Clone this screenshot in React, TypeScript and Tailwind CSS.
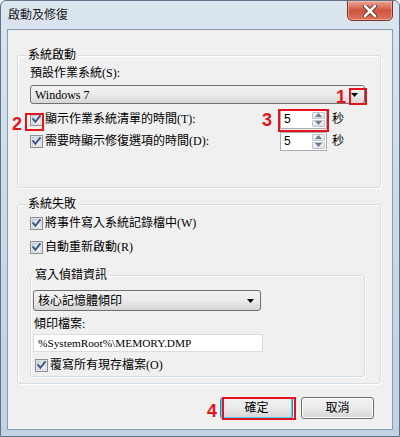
import React from "react";

const FONT = "font-['Liberation_Serif','Noto_Sans_CJK_TC',serif]";

function Check() {
  return (
    <svg width="13" height="13" viewBox="0 0 13 13" className="shrink-0">
      <defs>
        <linearGradient id="cbg" x1="0" y1="0" x2="1" y2="1">
          <stop offset="0" stopColor="#cbd5e1" />
          <stop offset="1" stopColor="#f6f8fa" />
        </linearGradient>
      </defs>
      <rect x="0.5" y="0.5" width="12" height="12" fill="#f4f4f4" stroke="#8e8f8f" />
      <rect x="2" y="2" width="9" height="9" fill="url(#cbg)" stroke="#b4bcc6" strokeWidth="0.6" />
      <path d="M3.2 6.2 L5.4 8.8 L9.9 3.2" stroke="#3f5488" strokeWidth="1.9" fill="none" strokeLinecap="square" />
    </svg>
  );
}

function Tri({ up = false, color = "#000" }: { up?: boolean; color?: string }) {
  return (
    <svg width="7" height="4" viewBox="0 0 7 4">
      {up ? <path d="M0 4 L3.5 0 L7 4 Z" fill={color} /> : <path d="M0 0 L7 0 L3.5 4 Z" fill={color} />}
    </svg>
  );
}

function Spin({ value }: { value: string }) {
  return (
    <div className="flex h-[19px] w-[47px] border border-[#abadb3] bg-white">
      <div className="flex-1 pl-[3px] text-[12px] leading-[17px] font-['Liberation_Sans',sans-serif]">{value}</div>
      <div className="flex w-[15px] flex-col gap-[1px] p-[1px]">
        <div className="flex flex-1 items-center justify-center rounded-[1px] border border-[#c2c6cc] bg-gradient-to-b from-[#f3f4f6] to-[#dfe3e8]">
          <Tri up color="#6b7a8f" />
        </div>
        <div className="flex flex-1 items-center justify-center rounded-[1px] border border-[#c2c6cc] bg-gradient-to-b from-[#f3f4f6] to-[#dfe3e8]">
          <Tri color="#6b7a8f" />
        </div>
      </div>
    </div>
  );
}

function Combo({ text, w, h, latin = false }: { text: string; w: string; h: string; latin?: boolean }) {
  return (
    <div
      className={`flex ${w} ${h} items-center rounded-[3px] border border-[#707070] bg-gradient-to-b from-[#f2f2f2] via-[#ebebeb] to-[#d6d6d6] pl-[4px] pr-[6px]`}
    >
      <span className={`flex-1 ${latin ? "text-[12px]" : "text-[12px]"}`}>{text}</span>
      <Tri />
    </div>
  );
}

function Group({ title, className, children }: { title: string; className: string; children: React.ReactNode }) {
  return (
    <div className={`flex flex-col rounded-[3px] border border-[#d5dfe5] shadow-[inset_1px_1px_0_#ffffff,1px_1px_0_#ffffff] ${className}`}>
      <div className="-mt-[8px] ml-[8px] w-fit bg-[#f0f0f0] px-[2px] leading-[14px]">{title}</div>
      {children}
    </div>
  );
}

function Btn({ label, def = false }: { label: string; def?: boolean }) {
  return (
    <div
      className={`flex h-[22px] w-[73px] items-center justify-center rounded-[3px] border ${
        def ? "border-[#3c7fb1] shadow-[inset_0_0_0_1px_#48d4f5]" : "border-[#707070] shadow-[inset_0_0_0_1px_#fcfcfc]"
      } bg-gradient-to-b from-[#f2f2f2] via-[#ebebeb] to-[#d6d6d6]`}
    >
      {label}
    </div>
  );
}

function Num({ n, className }: { n: string; className: string }) {
  return (
    <div className={`absolute text-[18px] font-bold leading-none text-[#e3141c] font-['Liberation_Sans',sans-serif] ${className}`}>{n}</div>
  );
}

function RedBox({ className }: { className: string }) {
  return <div className={`absolute border-2 border-[#e3141c] ${className}`} />;
}

export default function App() {
  return (
    <div
      className={`relative h-[437px] w-[400px] overflow-hidden rounded-t-[6px] border border-[#5f7388] bg-gradient-to-b from-[#dbe5ef] via-[#cbd9e7] to-[#c2d2e3] text-[12px] text-black ${FONT}`}
    >
      {/* title bar */}
      <div className="flex h-[28px] items-start justify-between">
        <div className="pl-[7px] pt-[7px] text-[12px] leading-[14px] text-[#1e1e1e]">啟動及修復</div>
        <div className="mr-[6px] mt-[-1px] flex h-[21px] w-[46px] items-center justify-center rounded-b-[5px] border border-[#7e3328] bg-gradient-to-b from-[#e9a594] via-[#cf5540] to-[#d8735a] shadow-[inset_0_0_0_1px_rgba(255,210,200,0.5)]">
          <svg width="14" height="12" viewBox="0 0 14 12">
            <path d="M2 1 L12 11 M12 1 L2 11" stroke="#5a1e16" strokeWidth="4.2" strokeLinecap="round" />
            <path d="M2 1 L12 11 M12 1 L2 11" stroke="#ffffff" strokeWidth="2.6" strokeLinecap="round" />
          </svg>
        </div>
      </div>

      {/* client area */}
      <div className="mx-[6px] flex h-[401px] flex-col border border-[#8a9cb0] bg-[#f0f0f0]">
        {/* group 1 */}
        <Group title="系統啟動" className="ml-[9px] mt-[25px] h-[133px] w-[364px]">
          <div className="flex flex-col pl-[12px]">
            <div className="mt-[4px] leading-[14px]">預設作業系統(S):</div>
            <div className="mt-[5px]">
              <Combo text="Windows 7" w="w-[335px]" h="h-[19px]" latin />
            </div>
            <div className="mt-[6px] flex h-[18px] w-[314px] items-center">
              <Check />
              <span className="ml-[2px] flex-1 leading-[14px]">顯示作業系統清單的時間(T):</span>
              <Spin value="5" />
              <span className="ml-[5px]">秒</span>
            </div>
            <div className="mt-[4px] flex h-[18px] w-[314px] items-center">
              <Check />
              <span className="ml-[2px] flex-1 leading-[14px]">需要時顯示修復選項的時間(D):</span>
              <Spin value="5" />
              <span className="ml-[5px]">秒</span>
            </div>
          </div>
        </Group>

        {/* group 2 */}
        <Group title="系統失敗" className="ml-[9px] mt-[16px] h-[180px] w-[364px]">
          <div className="flex flex-col pl-[12px]">
            <div className="mt-[3px] flex h-[18px] items-center">
              <Check />
              <span className="ml-[2px] leading-[14px]">將事件寫入系統記錄檔中(W)</span>
            </div>
            <div className="mt-[6px] flex h-[18px] items-center">
              <Check />
              <span className="ml-[2px] leading-[14px]">自動重新啟動(R)</span>
            </div>
            <Group title="寫入偵錯資訊" className="mt-[19px] h-[102px] w-[335px] [&>div:first-child]:ml-[2px]">
              <div className="flex flex-col pl-[2px]">
                <div className="mt-[8px]">
                  <Combo text="核心記憶體傾印" w="w-[228px]" h="h-[21px]" />
                </div>
                <div className="ml-[1px] mt-[6px] leading-[14px]">傾印檔案:</div>
                <div className="mt-[3px] flex h-[18px] w-[230px] items-center border border-[#dcdcdc] bg-white pl-[4px] text-[11.3px]">
                  %SystemRoot%\MEMORY.DMP
                </div>
                <div className="ml-[2px] mt-[4px] flex h-[18px] items-center">
                  <Check />
                  <span className="ml-[2px] leading-[14px]">覆寫所有現存檔案(O)</span>
                </div>
              </div>
            </Group>
          </div>
        </Group>

        {/* buttons */}
        <div className="mt-[13px] flex justify-end gap-[8px] pr-[18px]">
          <Btn label="確定" def />
          <Btn label="取消" />
        </div>
      </div>

      {/* annotations */}
      <Num n="1" className="left-[335px] top-[87px]" />
      <RedBox className="left-[348px] top-[87px] h-[17px] w-[18px]" />
      <Num n="2" className="left-[11px] top-[114px]" />
      <RedBox className="left-[24px] top-[112px] h-[18px] w-[19px]" />
      <Num n="3" className="left-[261px] top-[110px]" />
      <RedBox className="left-[277px] top-[108px] h-[23px] w-[51px]" />
      <Num n="4" className="left-[206px] top-[401px]" />
      <RedBox className="left-[221px] top-[396px] h-[23px] w-[74px]" />
    </div>
  );
}
